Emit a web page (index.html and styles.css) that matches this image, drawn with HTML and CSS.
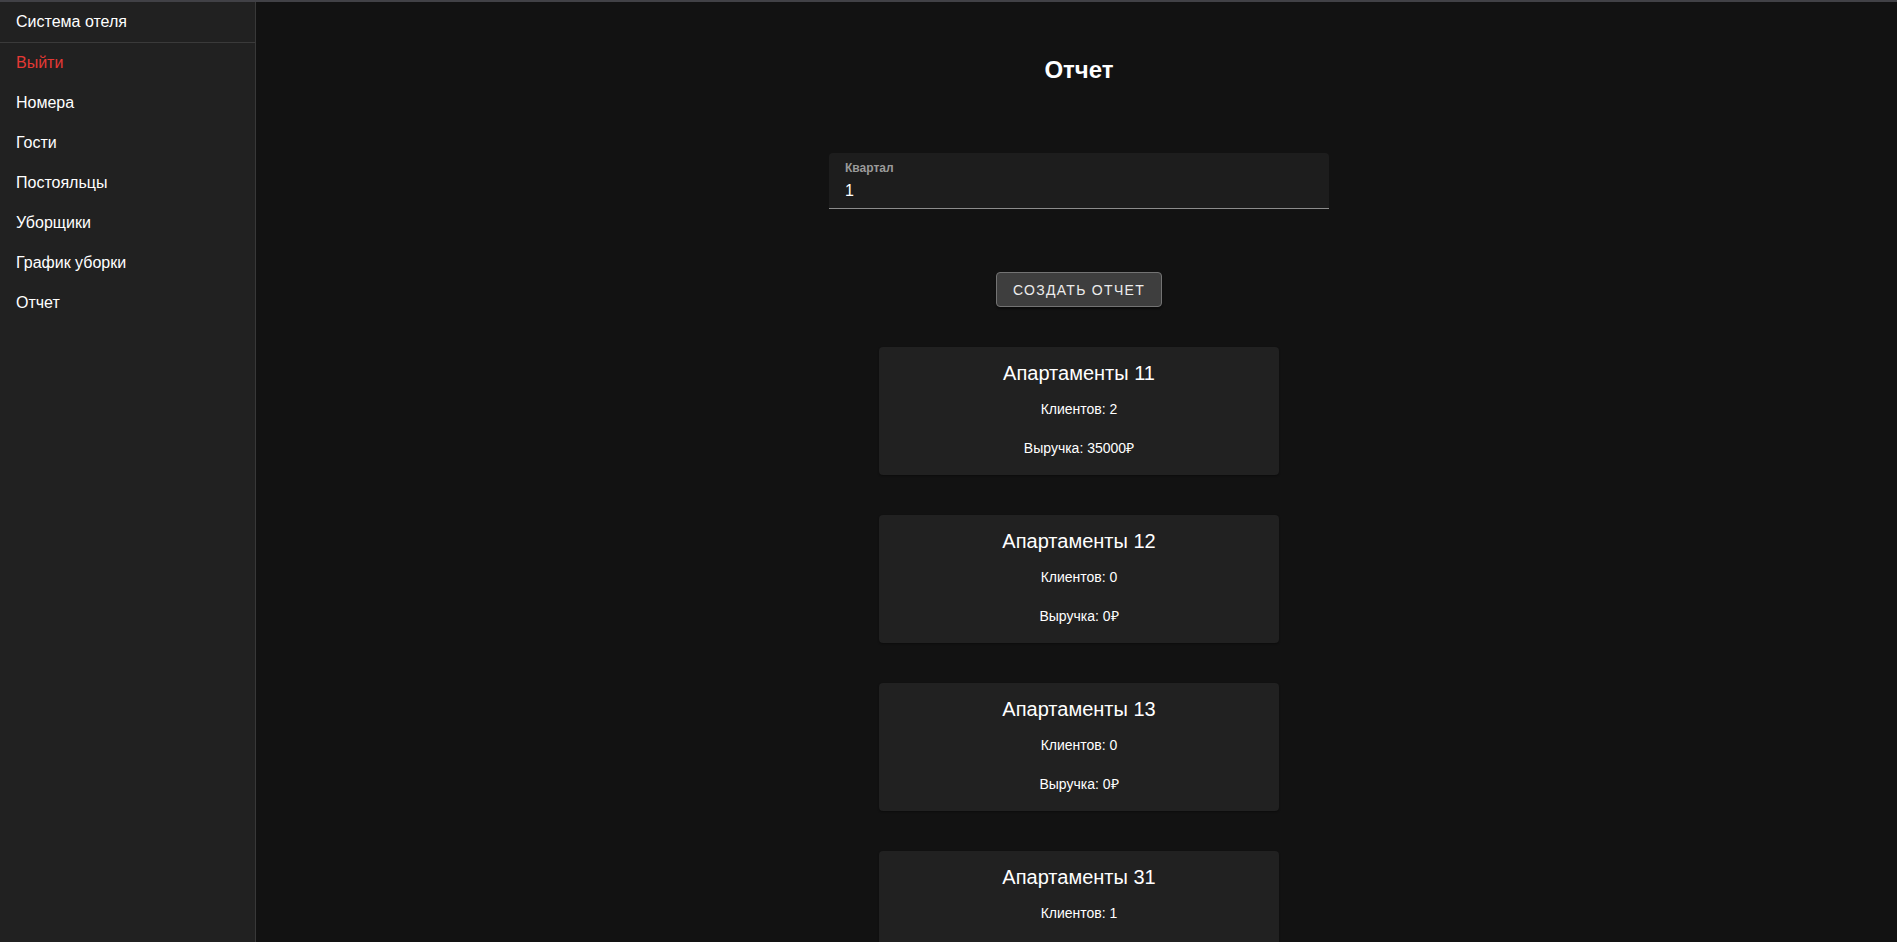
FILE: index.html
```html
<!DOCTYPE html>
<html lang="ru">
<head>
<meta charset="utf-8">
<title>Отчет</title>
<link rel="stylesheet" href="styles.css">
</head>
<body>
<div class="app">
  <aside class="sidebar">
    <div class="sidebar-title">Система отеля</div>
    <nav class="nav">
      <a class="nav-item nav-logout">Выйти</a>
      <a class="nav-item">Номера</a>
      <a class="nav-item">Гости</a>
      <a class="nav-item">Постояльцы</a>
      <a class="nav-item">Уборщики</a>
      <a class="nav-item">График уборки</a>
      <a class="nav-item">Отчет</a>
    </nav>
  </aside>
  <main class="main">
    <h1 class="page-title">Отчет</h1>
    <div class="field">
      <label class="field-label">Квартал</label>
      <div class="field-value">1</div>
    </div>
    <button class="btn">Создать отчет</button>
    <div class="cards">
      <div class="card">
        <div class="card-title">Апартаменты 11</div>
        <p class="card-line">Клиентов: 2</p>
        <p class="card-line card-line-gap">Выручка: 35000₽</p>
      </div>
      <div class="card">
        <div class="card-title">Апартаменты 12</div>
        <p class="card-line">Клиентов: 0</p>
        <p class="card-line card-line-gap">Выручка: 0₽</p>
      </div>
      <div class="card">
        <div class="card-title">Апартаменты 13</div>
        <p class="card-line">Клиентов: 0</p>
        <p class="card-line card-line-gap">Выручка: 0₽</p>
      </div>
      <div class="card">
        <div class="card-title">Апартаменты 31</div>
        <p class="card-line">Клиентов: 1</p>
        <p class="card-line card-line-gap">Выручка: 17500₽</p>
      </div>
    </div>
  </main>
</div>
</body>
</html>
```
FILE: styles.css
```css
html, body {
  margin: 0;
  padding: 0;
  height: 100%;
  overflow: hidden;
}
body {
  background: #121212;
  color: #ffffff;
  font-family: "Liberation Sans", Arial, sans-serif;
  border-top: 2px solid #414146;
  box-sizing: border-box;
}
.app {
  display: flex;
  height: 100%;
}
.sidebar {
  width: 255px;
  flex: 0 0 255px;
  background: #212121;
  border-right: 1px solid #383838;
  height: 100%;
}
.sidebar-title {
  height: 40px;
  line-height: 40px;
  padding: 0 16px;
  font-size: 16px;
  color: #ffffff;
  border-bottom: 1px solid #3a3a3a;
}
.nav {
  display: flex;
  flex-direction: column;
}
.nav-item {
  display: block;
  height: 40px;
  line-height: 40px;
  padding: 0 16px;
  font-size: 16px;
  color: #ffffff;
  text-decoration: none;
}
.nav-logout {
  color: #e53935;
}
.main {
  flex: 1;
  padding-left: 5px;
  display: flex;
  flex-direction: column;
  align-items: center;
  overflow: hidden;
}
.main > * {
  flex-shrink: 0;
}
.page-title {
  margin: 52px 0 0;
  font-size: 24px;
  line-height: 32px;
  font-weight: 700;
}
.field {
  margin-top: 67px;
  width: 500px;
  height: 56px;
  box-sizing: border-box;
  background: #1d1d1d;
  border-radius: 4px 4px 0 0;
  border-bottom: 1px solid #8c8c8c;
  padding: 0 16px;
}
.field-label {
  display: block;
  padding-top: 8px;
  font-size: 12px;
  line-height: 14px;
  font-weight: 600;
  color: #9a9a9a;
}
.field-value {
  margin-top: 6px;
  font-size: 16px;
  line-height: 19px;
  color: #ffffff;
}
.btn {
  margin-top: 63px;
  height: 35px;
  padding: 0 16px;
  background: #3e3e3e;
  border: 1px solid #737373;
  border-radius: 4px;
  color: #ececec;
  font-family: "Liberation Sans", Arial, sans-serif;
  font-size: 14px;
  font-weight: 500;
  letter-spacing: 1.3px;
  text-transform: uppercase;
  box-shadow: 0 2px 2px rgba(0, 0, 0, 0.4);
}
.cards {
  margin-top: 40px;
  display: flex;
  flex-direction: column;
  gap: 40px;
}
.card {
  width: 400px;
  height: 128px;
  flex-shrink: 0;
  box-sizing: border-box;
  background: #212121;
  border-radius: 4px;
  padding-top: 12px;
  text-align: center;
  box-shadow: 0 1px 2px rgba(0, 0, 0, 0.35);
}
.card-title {
  font-size: 20px;
  line-height: 28px;
}
.card-line {
  margin: 12px 0 0;
  font-size: 14px;
  line-height: 20px;
}
.card-line-gap {
  margin-top: 19px;
}
```
